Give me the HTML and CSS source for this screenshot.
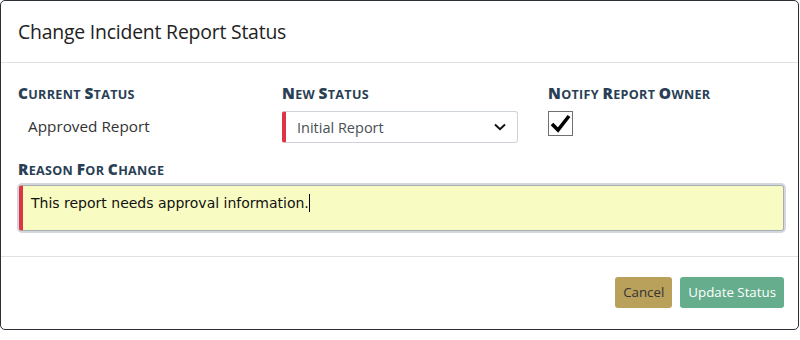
FILE: index.html
```html
<!doctype html>
<html>
<head>
<meta charset="utf-8">
<title>Change Incident Report Status</title>
<link rel="stylesheet" href="styles.css">
</head>
<body>
<div class="modal">
	<div class="modal-header">
		<h4 class="modal-title">Change Incident Report Status</h4>
	</div>
	<div class="modal-body">
		<div class="row">
			<div class="field">
				<label class="lbl"><b>C</b>urrent <b>S</b>tatus</label>
				<div class="static">Approved Report</div>
			</div>
			<div class="field">
				<label class="lbl"><b>N</b>ew <b>S</b>tatus</label>
				<div class="select">
					<span>Initial Report</span>
					<svg class="chev" width="12" height="8" viewBox="0 0 12 8"><path d="M1 1.5 L6 6.2 L11 1.5" fill="none" stroke="#111" stroke-width="2"/></svg>
				</div>
			</div>
			<div class="field">
				<label class="lbl"><b>N</b>otify <b>R</b>eport <b>O</b>wner</label>
				<div class="check">
					<svg width="23" height="23" viewBox="0 0 23 23"><path d="M3 12 L9 18 L20 4" fill="none" stroke="#000" stroke-width="3.6"/></svg>
				</div>
			</div>
		</div>
		<label class="lbl"><b>R</b>eason <b>F</b>or <b>C</b>hange</label>
		<div class="textarea">This report needs approval information.<span class="caret"></span></div>
	</div>
	<div class="modal-footer">
		<a class="btn btn-cancel" href="javascript:;">Cancel</a>
		<a class="btn btn-update" href="javascript:;">Update Status</a>
	</div>
</div>
</body>
</html>
```

FILE: styles.css
```css
*{ margin:0; padding:0; box-sizing:border-box;}
body{ background:#fff; font-family:"Open Sans","Noto Sans",sans-serif; color:#333;}
.modal{ width:799px; height:330px; border:1px solid #2b2f36; border-radius:5px; background:#fff; display:flex; flex-direction:column;}
.modal-header{ height:62px; border-bottom:1px solid #e2e2e2; padding:0 17px; display:flex; align-items:center;}
.modal-title{ font-weight:normal; font-size:19.4px; color:#222; letter-spacing:-0.2px; margin-top:-1px;}
.modal-body{ padding:22px 15px 0 17px; height:194px; border-bottom:1px solid #e2e2e2;}
.row{ display:grid; grid-template-columns:264px 266px 1fr;}
.lbl{ display:block; font-weight:bold; text-transform:uppercase; font-size:12.6px; color:#2a3f55; line-height:18px; height:18px; letter-spacing:0.3px;}
.lbl b{ font-size:15.4px; line-height:18px;}
.static{ font-size:15.3px; color:#333; padding:13px 0 0 10px; line-height:20px;}
.select{ margin-top:8px; width:236px; height:32px; border:1px solid #ced4da; border-left:4px solid #dc3545; border-radius:3px; display:flex; align-items:center; justify-content:space-between; padding:0 11px 0 11px; font-size:14.5px; color:#495057;}
.chev{ display:block;}
.check{ margin-top:8px; width:25px; height:25px; border:1px solid #707070; display:flex; align-items:center; justify-content:center;}
.check svg{ display:block;}
.row + .lbl{ margin-top:18px;}
.textarea{ margin-top:6px; height:46px; border:1px solid #a9adb2; border-left:4px solid #dc3545; border-radius:3px; background:#f9fcc2; box-shadow:0 0 0 2px #d3d8de; font-family:"DejaVu Sans",Verdana,sans-serif; font-size:14px; color:#111; padding:8px 8px; width:765px; margin-left:1px; line-height:17px;}
.caret{ display:inline-block; width:1px; height:18px; background:#000; vertical-align:-4px;}
.modal-footer{ flex:1; display:flex; justify-content:flex-end; align-items:flex-start; padding:20px 14px 0 0; gap:8px;}
.btn{ display:block; height:31px; line-height:31px; padding:0 8px; border-radius:3px; font-size:13.3px; text-decoration:none;}
.btn-cancel{ background:#b9a05b; color:#333;}
.btn-update{ background:#65ad8c; color:#fff;}
```
